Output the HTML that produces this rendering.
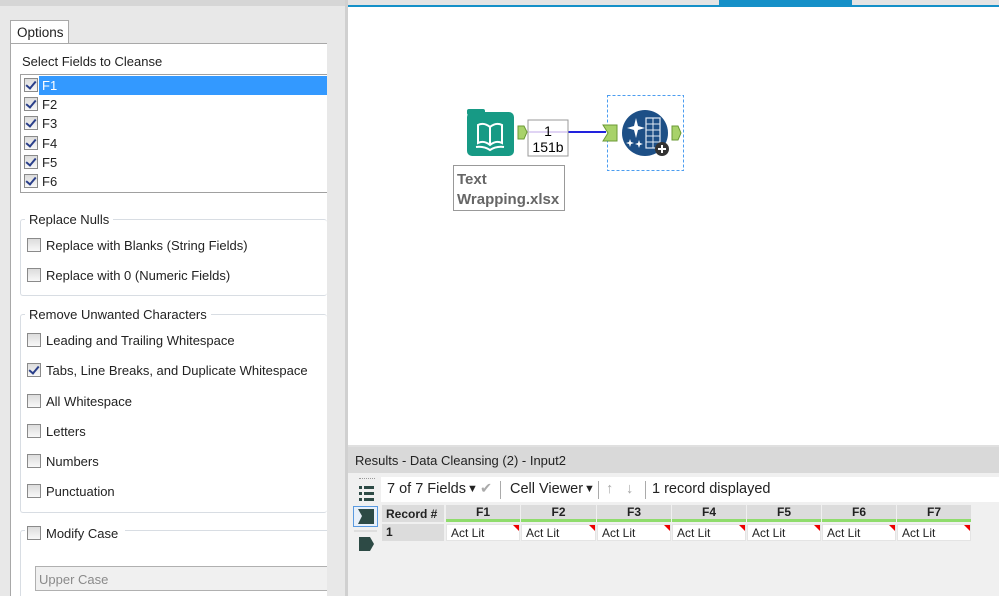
<!DOCTYPE html>
<html style="overflow:hidden;height:596px"><head><meta charset="utf-8"><style>
*{margin:0;padding:0;box-sizing:border-box}
body{width:999px;height:596px;overflow:hidden;position:relative;background:#e8e8e8;font-family:"Liberation Sans",sans-serif;font-size:13px;color:#222}
.a{position:absolute}
.cb{position:absolute;width:14px;height:14px;border:1px solid #8a8a8a;background:linear-gradient(#dcdcdc,#f8f8f8)}
.cb.on::after{content:"";position:absolute;left:3px;top:0px;width:4px;height:8px;border:solid #2a3f8a;border-width:0 2px 2px 0;transform:rotate(40deg)}
.lbl{position:absolute;font-size:13px;color:#222;white-space:nowrap}
.grp{position:absolute;border:1px solid #d8dde3;border-radius:3px;border-right:none}
.gt{position:absolute;background:#fff;padding:0 4px;font-size:13px}
.hd{position:absolute;top:505px;height:17px;background:#dcdcdc;border-bottom:3px solid #8fdc6c;font-weight:bold;font-size:12px;text-align:center;line-height:14px}
.cl{position:absolute;top:524px;height:17px;background:#fff;font-size:12px;line-height:17px;padding-left:4px;border:1px solid #e4e4e4}
.cl::after{content:"";position:absolute;right:0;top:0;border-top:6px solid #e00;border-left:6px solid transparent}
</style></head><body>
<div class="a" style="left:0;top:0;width:345px;height:6px;background:#d6d6d6"></div>
<div class="a" style="left:10px;top:20px;width:59px;height:24px;background:#fff;border:1px solid #a8a8a8;border-bottom:none;font-size:13.5px;padding:4px 0 0 6px">Options</div>
<div class="a" style="left:10px;top:43px;width:317px;height:553px;background:#fff;border-left:1px solid #a8a8a8;border-top:1px solid #a8a8a8"></div>
<div class="lbl" style="left:22px;top:54px">Select Fields to Cleanse</div>
<div class="a" style="left:20px;top:74px;width:307px;height:119px;border:1px solid #a0a0a0;border-right:none"></div>
<div class="a" style="left:39px;top:76px;width:288px;height:19px;background:#3399ff"></div>
<div class="cb on" style="left:24px;top:78px"></div><div class="lbl" style="left:42px;top:78px;color:#fff">F1</div>
<div class="cb on" style="left:24px;top:97px"></div><div class="lbl" style="left:42px;top:97px">F2</div>
<div class="cb on" style="left:24px;top:116px"></div><div class="lbl" style="left:42px;top:116px">F3</div>
<div class="cb on" style="left:24px;top:136px"></div><div class="lbl" style="left:42px;top:136px">F4</div>
<div class="cb on" style="left:24px;top:155px"></div><div class="lbl" style="left:42px;top:155px">F5</div>
<div class="cb on" style="left:24px;top:174px"></div><div class="lbl" style="left:42px;top:174px">F6</div>

<div class="grp" style="left:20px;top:219px;width:307px;height:77px"></div>
<div class="gt" style="left:25px;top:212px">Replace Nulls</div>
<div class="cb" style="left:27px;top:238px"></div><div class="lbl" style="left:46px;top:238px">Replace with Blanks (String Fields)</div>
<div class="cb" style="left:27px;top:268px"></div><div class="lbl" style="left:46px;top:268px">Replace with 0 (Numeric Fields)</div>

<div class="grp" style="left:20px;top:314px;width:307px;height:199px"></div>
<div class="gt" style="left:25px;top:307px">Remove Unwanted Characters</div>
<div class="cb" style="left:27px;top:333px"></div><div class="lbl" style="left:46px;top:333px">Leading and Trailing Whitespace</div>
<div class="cb on" style="left:27px;top:363px"></div><div class="lbl" style="left:46px;top:363px">Tabs, Line Breaks, and Duplicate Whitespace</div>
<div class="cb" style="left:27px;top:394px"></div><div class="lbl" style="left:46px;top:394px">All Whitespace</div>
<div class="cb" style="left:27px;top:424px"></div><div class="lbl" style="left:46px;top:424px">Letters</div>
<div class="cb" style="left:27px;top:454px"></div><div class="lbl" style="left:46px;top:454px">Numbers</div>
<div class="cb" style="left:27px;top:484px"></div><div class="lbl" style="left:46px;top:484px">Punctuation</div>

<div class="grp" style="left:20px;top:530px;width:307px;height:66px;border-bottom:none;border-radius:3px 0 0 0"></div>
<div class="gt" style="left:25px;top:525px;width:100px;height:16px"></div>
<div class="cb" style="left:27px;top:526px"></div><div class="lbl" style="left:46px;top:526px">Modify Case</div>
<div class="a" style="left:35px;top:566px;width:292px;height:25px;background:#f0f0f0;border:1px solid #b0b0b0;border-right:none;color:#8a8a8a;font-size:13px;padding:5px 0 0 3px">Upper Case</div>

<div class="a" style="left:345px;top:0;width:3px;height:596px;background:#d0d0d0"></div>
<div class="a" style="left:348px;top:0;width:651px;height:6px;background:#e4e4e4"></div>
<div class="a" style="left:719px;top:0;width:133px;height:6px;background:#1590c8"></div>
<div class="a" style="left:348px;top:5px;width:651px;height:2px;background:#1590c8"></div>
<div class="a" style="left:348px;top:7px;width:651px;height:438px;background:#fff"></div>

<svg class="a" style="left:440px;top:80px" width="260" height="140">
<rect x="27" y="32" width="47" height="44" rx="5" fill="#179a85"/>
<rect x="27" y="29" width="18" height="6" rx="2" fill="#179a85"/>
<path d="M38 45 L38 63 Q44 60 50 65 Q56 60 62 63 L62 45 Q56 42 50 47 Q44 42 38 45Z M50 47 L50 65" fill="none" stroke="#fff" stroke-width="2"/>
<path d="M36 67 Q44 66 50 70 Q56 66 64 67" fill="none" stroke="#fff" stroke-width="2"/>
<path d="M78 46 L84 46 L87 52 L84 59 L78 59Z" fill="#a8d26a" stroke="#6b9a35"/>
<line x1="128" y1="52" x2="166" y2="52" stroke="#2222dd" stroke-width="2"/>
<rect x="88" y="40" width="40" height="36" fill="#fff" stroke="#999"/>
<line x1="89" y1="52" x2="127" y2="52" stroke="#e0d4f4" stroke-width="2"/>
<text x="108" y="56" font-size="14" text-anchor="middle" font-family="Liberation Sans">1</text>
<text x="108" y="72" font-size="14" text-anchor="middle" font-family="Liberation Sans">151b</text>
<rect x="167.5" y="15.5" width="76" height="75" fill="none" stroke="#4a9cf0" stroke-dasharray="3,2"/>
<path d="M163 45 L177 45 L177 61 L163 61 L168 53Z" fill="#a8d26a" stroke="#6b9a35"/>
<circle cx="205" cy="53" r="23" fill="#1d4f86"/>
<rect x="206" y="38" width="14" height="30" fill="none" stroke="#dfe8f3" stroke-width="1.2"/>
<path d="M206 44h14M206 50h14M206 56h14M206 62h14M213 38v30" stroke="#dfe8f3" stroke-width="1"/>
<path d="M196 38 L198 46 L205 48 L198 50 L196 58 L194 50 L187 48 L194 46Z" fill="#fff"/>
<path d="M190 59 l1 3 3 1 -3 1 -1 3 -1 -3 -3 -1 3 -1z M199 60 l1 3 3 1 -3 1 -1 3 -1 -3 -3 -1 3 -1z" fill="#fff"/>
<circle cx="222" cy="69" r="7" fill="#333"/>
<path d="M218 69h8M222 65v8" stroke="#fff" stroke-width="2"/>
<path d="M232 46 L238 46 L241 53 L238 60 L232 60Z" fill="#a8d26a" stroke="#6b9a35"/>
<rect x="13.5" y="85.5" width="111" height="45" fill="#fff" stroke="#999"/>
<text x="17" y="104" font-size="15" font-weight="bold" fill="#666" font-family="Liberation Sans">Text</text>
<text x="17" y="124" font-size="15" font-weight="bold" fill="#666" font-family="Liberation Sans">Wrapping.xlsx</text>
</svg>

<div class="a" style="left:348px;top:445px;width:651px;height:2px;background:#e0e0e0"></div>
<div class="a" style="left:348px;top:447px;width:651px;height:26px;background:#d9d9d9;font-size:13px;padding:6px 0 0 7px">Results - Data Cleansing (2) - Input2</div>
<div class="a" style="left:348px;top:473px;width:651px;height:123px;background:#f0f0f0"></div>
<div class="a" style="left:359px;top:478px;width:16px;border-top:1px dotted #999"></div>
<svg class="a" style="left:352px;top:484px" width="30" height="80">
<g fill="#2d4a45"><rect x="7" y="2" width="3" height="3"/><rect x="12" y="2" width="10" height="3"/><rect x="7" y="8" width="3" height="3"/><rect x="12" y="8" width="10" height="3"/><rect x="7" y="14" width="3" height="3"/><rect x="12" y="14" width="10" height="3"/></g>
<rect x="1.5" y="22.5" width="24" height="20" fill="#e8f0fa" stroke="#5a9ae0"/>
<path d="M6 25 L22 25 L22 40 L6 40 L10 32Z" fill="#2d4a45"/>
<line x1="2" y1="47" x2="25" y2="47" stroke="#ccc"/>
<path d="M7 53 L18 53 L22 60 L18 67 L7 67Z" fill="#2d4a45"/>
</svg>
<div class="a" style="left:381px;top:477px;width:618px;height:25px;background:#fff;font-size:14.5px;line-height:25px">
<span class="a" style="left:6px">7 of 7 Fields</span>
<span class="a" style="left:86px;font-size:11px">▼</span>
<span class="a" style="left:99px;color:#aaa">✔</span>
<span class="a" style="left:119px;top:4px;height:18px;border-left:1px solid #aaa"></span>
<span class="a" style="left:129px">Cell Viewer</span>
<span class="a" style="left:203px;font-size:11px">▼</span>
<span class="a" style="left:217px;top:4px;height:18px;border-left:1px solid #aaa"></span>
<span class="a" style="left:225px;color:#aaa;font-weight:bold">↑</span>
<span class="a" style="left:245px;color:#aaa;font-weight:bold">↓</span>
<span class="a" style="left:264px;top:4px;height:18px;border-left:1px solid #aaa"></span>
<span class="a" style="left:271px">1 record displayed</span>
</div>
<div class="a" style="left:382px;top:505px;width:62px;height:17px;background:#dcdcdc;font-weight:bold;font-size:12px;padding:2px 0 0 4px">Record #</div>
<div class="a" style="left:382px;top:524px;width:62px;height:17px;background:#dcdcdc;font-weight:bold;font-size:12px;padding:1px 0 0 4px">1</div>
<div class="hd" style="left:446px;width:74px">F1</div><div class="cl" style="left:446px;width:74px">Act Lit</div>
<div class="hd" style="left:521px;width:75px">F2</div><div class="cl" style="left:521px;width:75px">Act Lit</div>
<div class="hd" style="left:597px;width:74px">F3</div><div class="cl" style="left:597px;width:74px">Act Lit</div>
<div class="hd" style="left:672px;width:74px">F4</div><div class="cl" style="left:672px;width:74px">Act Lit</div>
<div class="hd" style="left:747px;width:74px">F5</div><div class="cl" style="left:747px;width:74px">Act Lit</div>
<div class="hd" style="left:822px;width:74px">F6</div><div class="cl" style="left:822px;width:74px">Act Lit</div>
<div class="hd" style="left:897px;width:74px">F7</div><div class="cl" style="left:897px;width:74px">Act Lit</div>
</body></html>
